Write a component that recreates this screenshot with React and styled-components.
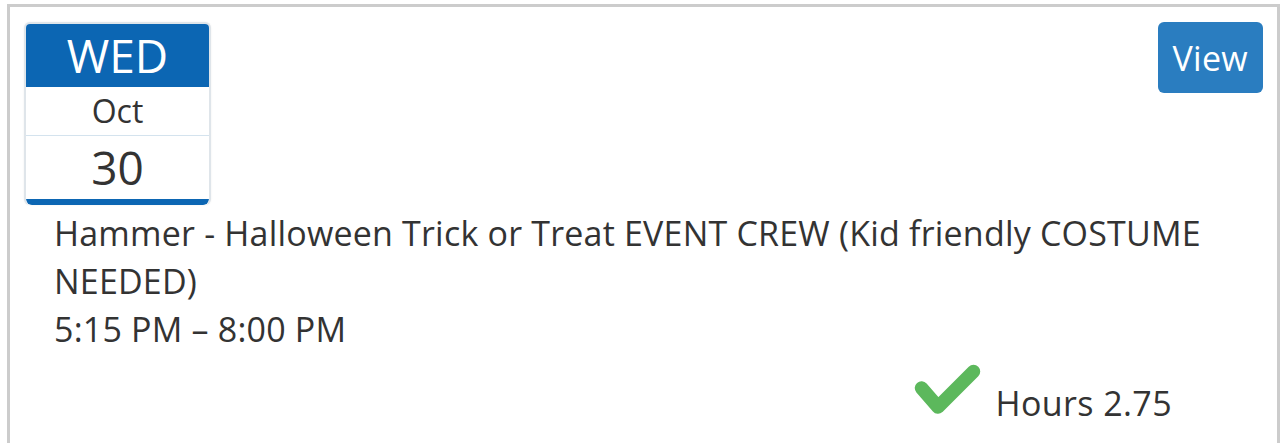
import React from 'react'
import styled, { createGlobalStyle } from 'styled-components'

const GlobalStyle = createGlobalStyle`
    body {
        margin: 0;
        background: #fff;
        font-family: 'Open Sans', 'Liberation Sans', sans-serif;
        color: #333;
    }
`

const Card = styled.div`
    margin: 4px 0 0 7px;
    padding: 15px 14px 40px 14px;
    border: 3px solid #cccccc;
    background: #fff;
`

const Header = styled.div`
    display: flex;
    align-items: flex-start;
    justify-content: space-between;
`

const DateBadge = styled.div`
    width: 183px;
    border: 2px solid #dfe5ea;
    border-bottom: 0;
    border-radius: 6px;
    overflow: hidden;
    background: #fff;
    text-align: center;
    box-shadow: 0 0 2px rgba(0, 0, 0, 0.08);
`

const Day = styled.div`
    height: 63px;
    line-height: 63px;
    font-size: 46px;
    color: #fff;
    background: #0c66b3;
`

const Month = styled.div`
    height: 48px;
    line-height: 48px;
    font-size: 32px;
    color: #333;
    border-bottom: 1px solid #d4e3ee;
`

const DayNumber = styled.div`
    height: 63px;
    line-height: 63px;
    font-size: 46px;
    color: #333;
    border-bottom: 6px solid #0c66b3;
    border-radius: 0 0 6px 6px;
`

const ViewButton = styled.button`
    height: 71px;
    padding: 0 15px;
    border: 0;
    border-radius: 6px;
    background: #2a7dc0;
    color: #fff;
    font-family: 'Open Sans', 'Liberation Sans', sans-serif;
    font-size: 34px;
    letter-spacing: 0.3px;
    cursor: pointer;
`

const Details = styled.div`
    margin: 4px 0 0 30px;
    font-size: 34px;
    letter-spacing: 0.2px;
    line-height: 48px;
    color: #333;
`

const HoursRow = styled.div`
    display: flex;
    align-items: baseline;
    justify-content: flex-end;
    gap: 14px;
    margin-top: 6px;
    padding-right: 91px;
    font-size: 34px;
    letter-spacing: 0.4px;
    line-height: 48px;
    color: #333;
`

function Check() {
    return (
        <svg width="76" height="57" viewBox="0 0 76 57">
            <polyline
                points="16.5,29 33,48 68.5,12.5"
                fill="none"
                stroke="#5cb85c"
                strokeWidth="13.5"
                strokeLinecap="round"
                strokeLinejoin="round" />
        </svg>
    )
}

function App() {
    return (
        <>
            <GlobalStyle />
            <Card>
                <Header>
                    <DateBadge>
                        <Day>WED</Day>
                        <Month>Oct</Month>
                        <DayNumber>30</DayNumber>
                    </DateBadge>
                    <ViewButton>View</ViewButton>
                </Header>
                <Details>
                    <div>Hammer - Halloween Trick or Treat EVENT CREW (Kid friendly COSTUME NEEDED)</div>
                    <div>5:15 PM – 8:00 PM</div>
                </Details>
                <HoursRow>
                    <Check />
                    <span>Hours 2.75</span>
                </HoursRow>
            </Card>
        </>
    )
}

export default App
